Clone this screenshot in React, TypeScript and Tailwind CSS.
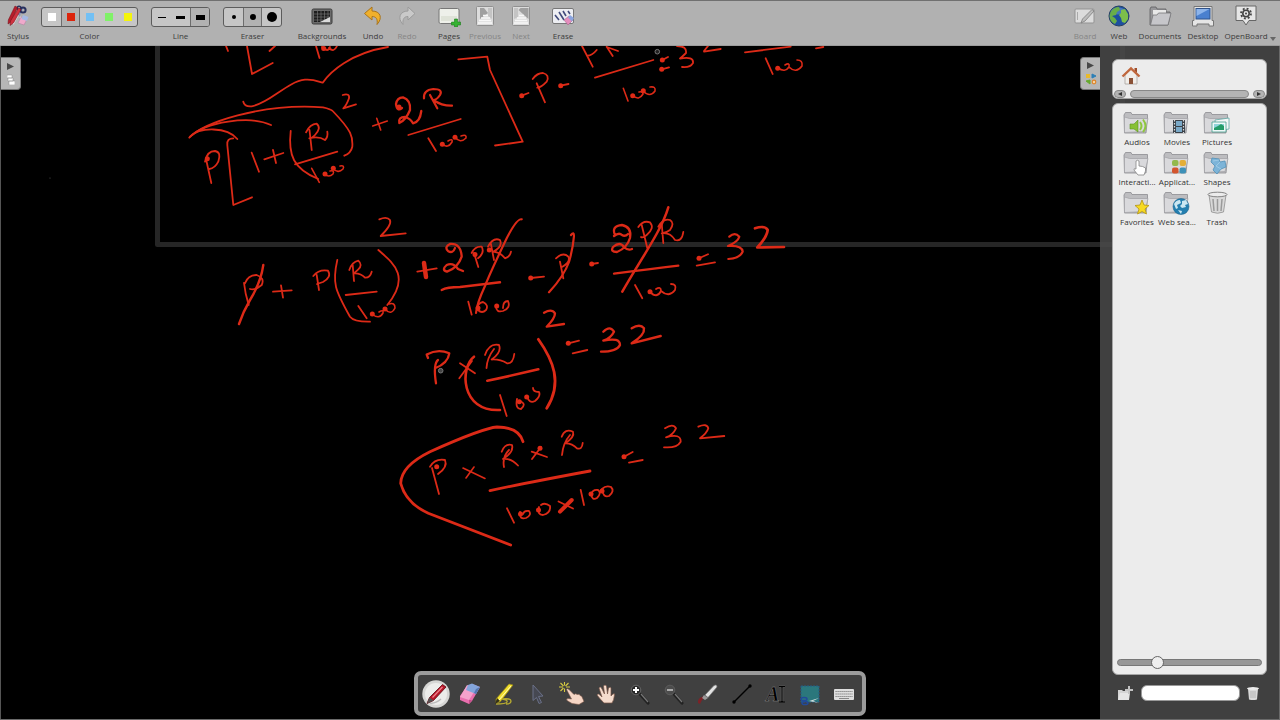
import React from 'react';

type Stroke = { d: string; w?: number };

// pen strokes on the board, in board coordinates
const strokes: Stroke[] = [
  // line cut by the toolbar
  { d: 'M226 46L228 51M247 46L252 74L272.7 63M269.5 51L275 46M316 46L319.5 58M322 47Q328 53 330 47M329 48Q334 53 337 46' },
  { d: 'M243.3 101.7Q244.5 107 251.7 106.3C270 103.3 286.7 81.7 305 79.7C313 79 317 81 322.7 82.7C330 72 350 53.3 388 47' },
  // overlines
  { d: 'M189.3 137.7C203 123 260 103 323 107.3Q331 109 332.7 111C352 131 353 137 352.3 146.7Q351 153 344.3 155.7' },
  { d: 'M190 136.7C205 122 250 115 271 125M190 136.7C200 126.7 227 126.7 237.3 139' },
  // P [ 1 + (R/100)
  { d: 'M205 161.7Q207 151 215 151Q221.7 152.3 218.3 161.7Q215 168.3 209.3 169M206 159L211.3 183' },
  { d: 'M233.3 138.3Q226.7 138.3 227.3 145L233.3 205L252 197.3' },
  { d: 'M251.7 152.7L259 171.7M264.3 159.3L283.3 153M273 150L276 163' },
  { d: 'M290.7 131C288 155 293.3 169 318.3 179' },
  { d: 'M306 132.3Q310 124.3 316.7 123.7Q321.7 128 315 135Q312 138.3 309.3 138.3Q319 136 325 140Q328.3 137 327.3 131.7M309.5 130L311.7 150' },
  { d: 'M295 164.3L337.3 151.7' },
  { d: 'M311.7 168.3L319.3 182.3M324 174Q329 178 333 174Q335 170 330 171M333 168.5Q338 174 343 169Q345 165 340 166', w: 1.6 },
  { d: 'M342.7 95Q350 93 349 98.3Q346.7 105 343.3 108.3L356 104.3' },
  // + 2R/100 ]
  { d: 'M372.7 126L387.3 121M376.7 118.3L380.7 130', w: 1.6 },
  { d: 'M402 108Q397 112 396 104Q397 97.5 403 97.3Q411 100 410 110Q406 120 399.3 123Q398 117 405 117Q411 119 413 123.3Q420 122 421.3 111', w: 2.3 },
  { d: 'M424 98.3Q423.3 90 433.3 89Q443.3 89 440 95Q436.7 100 433.3 100Q442 106 452 105.7M430 95L437.3 108.3', w: 2.2 },
  { d: 'M408.3 135L460.7 119M428.3 138.3L436 151' },
  { d: 'M442 144Q448 149 452 142Q453 138 448 141M455 137Q460 144 466 138Q467 134 461 136', w: 1.6 },
  { d: 'M458.3 59.3L487.3 56.7L490 70L522.7 141.7L495 145.5' },
  // - P - PR/100 : 32
  { d: 'M521.7 95.7L528.5 93M532.7 79Q537 73 543 73Q550 75 546.7 81.7Q541 87.7 537.3 87.7M536.7 83.3L545 102.3M560.7 85.7L568.5 84' },
  { d: 'M582 46L592.7 66.7M596.7 50Q592 55.7 587.3 55.7M606.7 46.7L612.7 56M606.7 47L618 51M595 77.7L653.3 60' },
  { d: 'M662.3 60L668 57M661.7 69.3L669 67.3M677 46Q687 46 686 53Q682 57 680 58.5Q694 56 693 63Q690 68 682 67M704 51.7L720.7 49M704 51L708 46' },
  { d: 'M623.3 88.3L628 101M632.7 95.7Q639 101 643 94Q643 91 639 92M643 91Q650 98 655 91Q656 86 650 87', w: 1.6 },
  { d: 'M745 52.3L790.7 46.7M765.7 58.3L772.7 74M816 48.3L823.3 47' },
  { d: 'M778 68Q785 73 789 67Q790 62 785 65M789 67Q796 74 802 66Q803 60 797 60', w: 1.6 },
  // P + P(R/100)^2
  { d: 'M379.3 219.3Q387 216 390 220Q392 225 380.7 236L405.7 233.3' },
  { d: 'M245 283.3Q248 275 256.7 275Q265 278 261.7 285Q255 290.7 250 289M244 283Q245 293 248.7 305' },
  { d: 'M263.3 265Q261 282 250 300Q243 312 239 324', w: 2.4 },
  { d: 'M273 291.7L291.7 290.3M281 285.3L283 297.7' },
  { d: 'M313.3 276Q319 269 328 270.7Q332 277 323 282L317 284M316.7 275L319 290' },
  { d: 'M337.3 260C332 283 335 290 350 316.7Q354 322 370 321.7' },
  { d: 'M352.7 265L354 281M349.3 270Q352 262 358.3 260.7Q363 265 358.3 269.3L354 273.3Q361 273 365 277.7Q370 278 371.7 271.7' },
  { d: 'M345.7 295L376.7 291.7M358.3 306L366.7 318.3' },
  { d: 'M372 314Q379 320 383 313Q384 309 379 312M385 309Q391 316 395 308Q395 302 389 304', w: 1.6 },
  { d: 'M378.3 250C393 263 411 276 387.3 305' },
  // + 2PR/100
  { d: 'M417.3 271.7L436.7 268.3' },
  { d: 'M424 263L426 277', w: 4.5 },
  { d: 'M455 248Q453 254 448 251Q444 247 450 244Q461 243 461.7 256.7Q458 268 447 271.7Q441 270 446.7 265Q453 262 458 269L463 271', w: 2.3 },
  { d: 'M471.7 253Q475 246 481.7 246.7Q485 253 478 258.3M474 253L478.3 267M488 246.7Q493 237 500 240Q503 247 493 251.7Q500 252 505 258.3Q510 257 511 251.7M490.7 243L494 260' },
  { d: 'M521.7 219.3Q517 218 506.7 238.3Q490 273 485 286Q477 303 476 313', w: 2.2 },
  { d: 'M441.7 290Q447 287 460 287L500 282.3', w: 2.4 },
  { d: 'M468.3 301.7L471.7 314.7M477 310Q477 303 483 302Q489 305 486 310Q482 314 478 310M496 306Q496 313 503 311Q511 308 508 301Q503 301 503 308' },
  // - P - 2PR/100 = 32
  { d: 'M530.7 278L544 276.7M556 258.3Q563.3 251.7 568.3 256.7Q571 262 562 267M560 261.7L563.3 278.3' },
  { d: 'M571 235Q574 231 574 236Q573 248 569 262Q564 276 549 292.3', w: 2.2 },
  { d: 'M591.7 264L598 263' },
  { d: 'M615 235Q611 226 622 225Q632 227 630 238Q627 248 617 252Q610 252 613 247Q620 241 624 247Q628 251 632 249M614 236Q619 232 622 235Q625 237 628 234', w: 2.3 },
  { d: 'M638.3 227Q643 220 650 222.3Q655 228 646.7 235Q642.7 238.3 641 237M641.7 225L647.3 248' },
  { d: 'M658.3 226.7Q663 218 670 220Q675 223 670 230Q666 233 661.7 233.3Q670 232 675 240Q682 242 683.3 232M661.7 223.3L663.3 243' },
  { d: 'M668.3 207.3C661 232 640 260 622.3 291.7', w: 2.5 },
  { d: 'M614 273.7Q650 269 678.3 265.7', w: 2.3 },
  { d: 'M635 285L642.3 298.3M650 292Q657 299 661 291Q661 286 656 289M661 291Q669 298 675 290Q677 284 671 284' },
  { d: 'M699 258.3L708 254.3M696.7 265.7L715 262.3' },
  { d: 'M729.3 236.7Q735 231.7 739.3 236.7Q738 241.7 728 246Q742 245 742.7 251.7Q740 258.3 728.3 259', w: 2.2 },
  { d: 'M755 228.3Q765 225 767.7 230Q767 237 757.3 247.5L784 247', w: 2.7 },
  // P x (R/100)^2 = 32
  { d: 'M544 312.7Q551.7 308.3 555 313.3Q555 318.3 546.7 326.7L564 324', w: 2.3 },
  { d: 'M568.3 343.3L579 340.7M572.7 353.3L587.3 350' },
  { d: 'M603.3 331.7Q610 325 614 331.7Q611 338 603.3 340.7Q620 337 620 345Q617 351.7 601 351.7', w: 2.3 },
  { d: 'M631.7 328.3Q640 323.3 644 328.3Q645 335 631.7 343.3L660.7 336', w: 2.4 },
  { d: 'M428 358L426.7 354.5Q438 348.3 449.3 353.3Q448 363 435 368.3M438 360Q433 364 436 383.3', w: 2.3 },
  { d: 'M460 363.3L475 373.3M459.3 378.3L472 361' },
  { d: 'M474 356.7C460 367 460 412 500 410', w: 2.6 },
  { d: 'M485 355Q489 343 499 345Q502 352 491.7 359.5Q500 359 507 363.3Q513 364 514.3 354M494 349Q487 358 486.5 368' },
  { d: 'M487.3 380.7Q510 376 538.3 369.3', w: 2.6 },
  { d: 'M500 395L506.7 416M517 399Q515 409 521 409Q527 404 520 401M527 396Q529 404 535 401Q541 396 539 392Q533 392 533 388' },
  { d: 'M538.3 339.3C553 360 563 383 546.7 408.3', w: 2.8 },
  // P x R x R / 100 x 100 = 32
  { d: 'M523 441.7Q519 427 497 427Q483 428 430 451.7Q401 466 400.7 483.3Q406 503 428.3 513.3L510.7 545', w: 2.8 },
  { d: 'M430 466.7Q435 458.3 445 460Q448 467 438 474M432 468L439 494' },
  { d: 'M463 468L485 478.5M466 478L474 467', w: 1.6 },
  { d: 'M501.7 451.7Q505 443 512 445Q514 452 503 459Q511 458 518 465.5M509 450Q502 457 504 467' },
  { d: 'M531.7 451.7L547 457M532 459L541 447' },
  { d: 'M561.7 436.7Q565 428 573 431.7Q575 437 565 443.3Q572 443 577 448.3Q582 450 582.7 443M570 435Q563 443 562 455' },
  { d: 'M490 490.7Q520 484 590 471', w: 2.8 },
  { d: 'M507 508.3L514 522.7M520 512Q519 520 526 518Q532 515 529 511Q524 510 523 514M539 507Q537 515 543 515Q551 513 550 506Q545 502 541 505' },
  { d: 'M560 511.7L571.7 500', w: 4 },
  { d: 'M558.5 501.5L573 508.5' },
  { d: 'M580.7 490L584 505M591 494Q592 501 597 498Q602 493 598 490Q593 489 591 494M602 489Q603 498 609 496Q615 491 611 487Q606 485 602 489' },
  { d: 'M624 456.7L632.7 452M629 462.7L642.7 460' },
  { d: 'M665 428.3Q673 423 676 428.3Q673 435 666 437.3Q681 433 680.7 441.7Q677 448.3 664 447.3' },
  { d: 'M698.3 426.7Q707 423 708.3 428.3Q707 433 700 438.3L724.3 436' },
];

const dots = [
  [323.7, 48.5], [207.3, 158.7], [325, 174], [333.3, 168.3], [399, 107], [442.3, 144.3], [455, 137.3],
  [521.7, 95.7], [560.7, 85.7], [632.7, 95.7], [643.3, 90.7], [662.3, 60], [661.7, 69.3], [777.7, 68.3],
  [372.3, 314], [385, 309], [475, 254.5], [489.3, 250], [478, 308], [496.7, 306], [530.7, 278],
  [591.7, 264], [650, 291.7], [699, 258.3], [568.3, 343.3], [519.3, 401.7], [526.7, 397],
  [436.7, 466.7], [540, 448.3], [520.5, 514], [538.5, 510], [591, 494], [602, 491], [624, 456.7],
];

function Board() {
  return (
    <svg
      className="absolute inset-0 h-full w-full"
      viewBox="0 46 1280 673"
      preserveAspectRatio="xMinYMin slice"
      fill="none"
      aria-label="Board"
    >
      <path d="M157.5 40V244.5H1122.5V40" stroke="#262626" strokeWidth="5" strokeLinejoin="round" />
      <g stroke="#dc2a17" strokeLinecap="round" strokeLinejoin="round">
        {strokes.map((s, i) => (
          <path key={i} d={s.d} strokeWidth={s.w ?? 1.8} />
        ))}
      </g>
      <g fill="#e02a16">
        {dots.map(([x, y], i) => (
          <circle key={i} cx={x} cy={y} r="2.5" />
        ))}
      </g>
      <circle cx="657.3" cy="51.7" r="2.3" fill="#222" stroke="#777" />
      <circle cx="440.7" cy="370.7" r="2.3" fill="#444" stroke="#777" />
      <circle cx="50" cy="178" r="0.6" fill="#555" />
    </svg>
  );
}

const icon = 'h-[22px] w-[24px] shrink-0';

const StylusIcon = () => (
  <svg viewBox="0 0 24 22" className={icon}>
    <path d="M11 2l2 8M17 2l-4 9" stroke="#8a94b8" strokeWidth="1.5" />
    <circle cx="17" cy="5" r="2.6" fill="none" stroke="#28305e" strokeWidth="2" />
    <circle cx="13" cy="3" r="1.8" fill="none" stroke="#28305e" strokeWidth="1.6" />
    <path d="M14 12l5 5M12 10l-5 9" stroke="#e4e6ee" strokeWidth="1.6" />
    <path d="M9 1l2.5 1.5L5 17l-3 2 .3-4z" fill="#b61d2b" stroke="#701018" strokeWidth=".5" />
    <path d="M12.500 3l2.500 1.500L7.500 18l-3.500 2.500.5-4.500z" fill="#cf3340" stroke="#701018" strokeWidth=".5" />
    <path d="M15 12l6 2-3 6-6-2z" fill="#efa9cb" stroke="#a87e9c" strokeWidth=".5" />
    <path d="M17 10l5.500 2-1.500 4-5.500-2z" fill="#a5b9e4" />
  </svg>
);

const BackgroundsIcon = () => (
  <svg viewBox="0 0 24 22" className={icon}>
    <rect x="2" y="4" width="20" height="15" rx="1.500" fill="#6b6b6b" stroke="#3d3d3d" />
    <rect x="4" y="6" width="16" height="11" fill="#1d1d1d" />
    <path d="M4 9h16M4 12h16M4 15h16M7.500 6v11M11 6v11M14.500 6v11M18 6v11" stroke="#7c7c7c" strokeWidth=".6" />
    <path d="M10 17l10-5v5z" fill="#dcdcdc" />
  </svg>
);

const ArrowIcon = ({ redo }: { redo?: boolean }) => (
  <svg viewBox="0 0 24 22" className={icon}>
    <path
      d={
        redo
          ? 'M20 8.500L13 2v4C5 6 2 13 8 19.500 7.500 14 9 11.500 13 11.500V15z'
          : 'M3.500 8.500L11 2v4c8.500 0 11 7 5 13.500C17 14 15 11.500 11 11.500V15z'
      }
      fill={redo ? '#c9c9c9' : '#f0b02c'}
      stroke={redo ? '#9b9b9b' : '#a9741b'}
      strokeWidth="1"
      strokeLinejoin="round"
    />
  </svg>
);

const PagesIcon = () => (
  <svg viewBox="0 0 24 22" className={icon}>
    <rect x="2" y="3.500" width="20" height="15" rx="1.500" fill="#eef0ea" stroke="#777" />
    <path d="M4 11h16v5H4z" fill="#dfe3d8" />
    <path d="M17.500 14h3v3h3v3h-3v2h-3v-2h-3v-3h3z" fill="#35b232" stroke="#1b7d1b" strokeWidth=".6" />
  </svg>
);

const PageTurnIcon = ({ next }: { next?: boolean }) => (
  <svg viewBox="0 0 24 22" className={icon}>
    <rect x="3.500" y="1.500" width="17" height="19" rx="1" fill="#dcdcdc" stroke="#909090" />
    <path d={next ? 'M19.500 3v11l-10-9 2-2z' : 'M7 3v11l8-6-4-5z'} fill="#a0a0a0" />
    <path d={next ? 'M5 3h4v9l-4 2z' : 'M15 3h4v11l-4-3z'} fill="#c4c4c4" />
    <path d="M10 10.500h5M8 13h9M6 15.500h12M5 18h14" stroke="#f8f8f8" strokeWidth="1.700" />
  </svg>
);

const EraseIcon = () => (
  <svg viewBox="0 0 24 22" className={icon}>
    <rect x="1.500" y="3.500" width="21" height="15" rx="1.500" fill="#edeef2" stroke="#777" />
    <path d="M4 10l4 5M8 7l5 8M12 6l3 5M17 6l2 3" stroke="#424b7c" strokeWidth="1.600" />
    <path d="M13 15l5-4 4 4-5 5z" fill="#e58dbd" stroke="#9b5b83" strokeWidth=".5" />
    <path d="M19 10l4 3-2 3.500-4-4z" fill="#8ba5df" />
  </svg>
);

const BoardIcon = () => (
  <svg viewBox="0 0 24 22" className={icon}>
    <rect x="2" y="4" width="19" height="14" rx="1" fill="#dcdcdc" stroke="#939393" />
    <path d="M4.500 7v8" stroke="#aaa" />
    <path d="M19 4.500l2 1.500L12 16l-4 2 1.500-4z" fill="#bcbcbc" stroke="#7c7c7c" strokeWidth=".8" />
  </svg>
);

const WebIcon = () => (
  <svg viewBox="0 0 24 22" className={icon}>
    <circle cx="12" cy="11" r="10" fill="#1d4f9f" stroke="#274064" />
    <ellipse cx="11" cy="6" rx="7" ry="3.500" fill="#6d9fdc" opacity=".5" />
    <path d="M3.500 7Q7 2 12 2l1 3-3 2-1 3-4 1 3 2 2 3-2 3Q3 17 2.500 11z" fill="#69ae48" />
    <path d="M14 5l4-1 3 5v5l-3 4-3-1-1-4-2-3 2-2z" fill="#7cbf4a" />
  </svg>
);

const DocumentsIcon = () => (
  <svg viewBox="0 0 24 22" className={icon}>
    <path d="M2 4l1-2h5l1 2h9v3h4v4l-2 9H2z" fill="#97979a" stroke="#5d5d60" strokeWidth=".8" />
    <path d="M5 5h13v5H5z" fill="#e8e8e8" />
    <path d="M2.500 20L5 10h4l1.500-2H23l-3 12z" fill="#c6c6ca" stroke="#77777a" strokeWidth=".8" />
  </svg>
);

const DesktopIcon = () => (
  <svg viewBox="0 0 24 22" className={icon}>
    <path d="M3 1.500h18v14h1.500V21H18v-2H6v2H1.500v-5.500H3z" fill="#e5e5e5" stroke="#777" />
    <rect x="5" y="3.500" width="14" height="10.500" fill="#4a80cf" stroke="#31548c" />
    <path d="M5.500 4h13L5.500 11z" fill="#8db4ea" />
  </svg>
);

const OpenBoardIcon = () => (
  <svg viewBox="0 0 24 22" className={icon}>
    <path d="M2 1h20v14.500h-7L12 20l-3-4.500H2z" fill="#e6e6e6" stroke="#666" strokeLinejoin="round" />
    <circle cx="12" cy="8.500" r="3.200" fill="none" stroke="#444" strokeWidth="1.600" />
    <circle cx="12" cy="8.500" r="5" fill="none" stroke="#444" strokeWidth="1.800" strokeDasharray="1.900 2.030" />
    <circle cx="12" cy="8.500" r="1" fill="#444" />
  </svg>
);

type Item = { label: string; width: string; icon: React.ReactNode; disabled?: boolean };

function ToolButton({ item }: { item: Item }) {
  return (
    <button
      type="button"
      disabled={item.disabled}
      className={`${item.width} flex shrink-0 flex-col items-center gap-[3px] whitespace-nowrap leading-3 ${
        item.disabled ? 'text-[#858585]' : 'text-[#3c3c3c]'
      }`}
    >
      {item.icon}
      <span>{item.label}</span>
    </button>
  );
}

function Choice({ label, cells, active, cell }: { label: string; cells: { name: string; mark: React.ReactNode }[]; active: number; cell: string }) {
  return (
    <div role="group" aria-label={label} className="flex shrink-0 flex-col items-center gap-[3px] pt-0.5 leading-3 text-[#3c3c3c]">
      <div className="flex h-5 overflow-hidden rounded-[3px] border border-[#5c5c5c] bg-[#c6c6c6]">
        {cells.map((c, i) => (
          <button
            key={c.name}
            type="button"
            aria-label={c.name}
            aria-pressed={i === active}
            className={`${cell} flex items-center justify-center ${i === active ? 'border-x border-[#6d6d6d] bg-[#b2b2b2] first:border-l-0 last:border-r-0' : ''}`}
          >
            {c.mark}
          </button>
        ))}
      </div>
      <span>{label}</span>
    </div>
  );
}

const colors = [
  { name: 'White', mark: <span className="h-2 w-2 bg-white" /> },
  { name: 'Red', mark: <span className="h-2 w-2 bg-[#dc240c]" /> },
  { name: 'Blue', mark: <span className="h-2 w-2 bg-[#72c0f4]" /> },
  { name: 'Green', mark: <span className="h-2 w-2 bg-[#80f268]" /> },
  { name: 'Yellow', mark: <span className="h-2 w-2 bg-[#f4f40c]" /> },
];

const lines = [
  { name: 'Thin line', mark: <span className="h-px w-2 bg-black" /> },
  { name: 'Medium line', mark: <span className="h-[3px] w-[9px] bg-black" /> },
  { name: 'Thick line', mark: <span className="h-[5px] w-[9px] bg-black" /> },
];

const erasers = [
  { name: 'Small eraser', mark: <span className="h-1 w-1 rounded-full bg-black" /> },
  { name: 'Medium eraser', mark: <span className="h-1.5 w-1.5 rounded-full bg-black" /> },
  { name: 'Large eraser', mark: <span className="h-2.5 w-2.5 rounded-full bg-black" /> },
];

const editItems: Item[] = [
  { label: 'Undo', width: 'w-[34px]', icon: <ArrowIcon /> },
  { label: 'Redo', width: 'w-[34px]', icon: <ArrowIcon redo />, disabled: true },
];

const pageItems: Item[] = [
  { label: 'Pages', width: 'w-9', icon: <PagesIcon /> },
  { label: 'Previous', width: 'w-9', icon: <PageTurnIcon />, disabled: true },
  { label: 'Next', width: 'w-9', icon: <PageTurnIcon next />, disabled: true },
];

const modeItems: Item[] = [
  { label: 'Board', width: 'w-[34px]', icon: <BoardIcon />, disabled: true },
  { label: 'Web', width: 'w-[34px]', icon: <WebIcon /> },
  { label: 'Documents', width: 'w-12', icon: <DocumentsIcon /> },
  { label: 'Desktop', width: 'w-[38px]', icon: <DesktopIcon /> },
  { label: 'OpenBoard', width: 'w-12', icon: <OpenBoardIcon /> },
];

function TopBar() {
  return (
    <header className="relative z-10 flex h-[46px] shrink-0 items-start border-t border-b border-t-[#707070] border-b-[#9c9c9c] bg-[#b1b1b1] pt-1 pl-1 text-[8px]">
      <ToolButton item={{ label: 'Stylus', width: 'w-7', icon: <StylusIcon /> }} />
      <div className="ml-[9px] flex gap-[13px]">
        <Choice label="Color" cells={colors} active={1} cell="w-[19px]" />
        <Choice label="Line" cells={lines} active={2} cell="w-[19px]" />
        <Choice label="Eraser" cells={erasers} active={1} cell="w-[19px]" />
      </div>
      <div className="ml-4 flex">
        <ToolButton item={{ label: 'Backgrounds', width: 'w-12', icon: <BackgroundsIcon /> }} />
      </div>
      <div className="ml-2.5 flex">
        {editItems.map((item) => <ToolButton key={item.label} item={item} />)}
      </div>
      <div className="ml-[7px] flex">
        {pageItems.map((item) => <ToolButton key={item.label} item={item} />)}
      </div>
      <div className="ml-[7px] flex">
        <ToolButton item={{ label: 'Erase', width: 'w-[34px]', icon: <EraseIcon /> }} />
      </div>
      <div className="ml-auto flex">
        {modeItems.map((item) => <ToolButton key={item.label} item={item} />)}
        <button type="button" aria-label="More" className="flex h-9 w-[10px] items-end">
          <svg viewBox="0 0 6 4" className="h-1 w-1.5"><path d="M0 0h6L3 4z" fill="#666" /></svg>
        </button>
      </div>
    </header>
  );
}

const Folder = ({ children }: { children?: React.ReactNode }) => (
  <svg viewBox="0 0 28 26" className="h-[26px] w-7">
    <path d="M1 5L2.500 2.500H8l1 2h15.500V8L23 23H1.500z" fill="#bdbdc0" stroke="#8b8b90" strokeWidth=".8" />
    <path d="M1.500 22.500V7l5 1.500H25l-3 13z" fill="#d9d9dc" stroke="#a0a0a5" strokeWidth=".7" />
    {children}
  </svg>
);

const library = [
  {
    label: 'Audios',
    icon: (
      <Folder>
        <path d="M7 14h4l4-4v12l-4-3H7z" fill="#87c034" stroke="#5d9420" strokeWidth=".6" />
        <path d="M17 12q3 4 0 8M20 9.500q5 6.500 0 12.500" stroke="#8fc73e" strokeWidth="2" fill="none" />
      </Folder>
    ),
  },
  {
    label: 'Movies',
    icon: (
      <Folder>
        <rect x="10" y="10" width="12" height="13" fill="#3a4148" />
        <path d="M13 11h6v5h-6zM13 17h6v5h-6z" fill="#7aa9c8" />
        <path d="M11.500 10v13M20.500 10v13" stroke="#ddd" strokeWidth="1.200" strokeDasharray="1.500 1.500" />
      </Folder>
    ),
  },
  {
    label: 'Pictures',
    icon: (
      <Folder>
        <path d="M12 10l14-2v11l-13 2z" fill="#f3f7f7" stroke="#60a8a4" strokeWidth=".8" />
        <path d="M9 12h14v10H9z" fill="#eef8f8" stroke="#48a08e" strokeWidth=".8" />
        <path d="M11 14h10v6H11z" fill="#8fd4da" />
        <path d="M11 20v-2l4-2 3-2 3 2v4z" fill="#249c68" />
      </Folder>
    ),
  },
  {
    label: 'Interacti...',
    icon: (
      <Folder>
        <path
          d="M13 11q1.500-1.500 3 0v5q4 0 6.500 2v3l-1.500 4h-6l-4-5q-.5-2 2-1z"
          fill="#fff"
          stroke="#858585"
          strokeWidth=".8"
        />
      </Folder>
    ),
  },
  {
    label: 'Applicat...',
    icon: (
      <Folder>
        <rect x="9" y="10" width="6.500" height="6" rx="2" fill="#93b94c" />
        <rect x="16.500" y="10" width="6.500" height="6" rx="2" fill="#e3ae37" />
        <rect x="9" y="17.500" width="6.500" height="6" rx="2" fill="#d3552e" />
        <rect x="16.500" y="17.500" width="6.500" height="6" rx="2" fill="#3e91b8" />
      </Folder>
    ),
  },
  {
    label: 'Shapes',
    icon: (
      <Folder>
        <path d="M9 8l7 1 1 3 5-1 1 6-5 2-4 5-4-4 2-4-4-4z" fill="#7db4d8" stroke="#5290b8" strokeWidth=".8" />
        <path d="M10 11l6-1M13 16l5 3M17 12l-4 4" stroke="#a5cfe8" strokeWidth=".8" />
      </Folder>
    ),
  },
  {
    label: 'Favorites',
    icon: (
      <Folder>
        <path d="M19 10l2 5 5 .5-4 3.500 1.500 5-4.500-2.500-4.500 2.500L16 19l-4-3.500 5-.5z" fill="#f7da22" stroke="#b49412" strokeWidth=".8" />
      </Folder>
    ),
  },
  {
    label: 'Web sea...',
    icon: (
      <Folder>
        <circle cx="18" cy="16.500" r="8" fill="#247fb0" stroke="#1b648e" strokeWidth=".6" />
        <path d="M11 14q2-4 6-4l1 3-4 2 1 3-2 1zM19 11l4-1 2 4-3 1 1 2-4 1-2-2 2-2zM15 20l4 1-1 3z" fill="#cbe7f2" />
      </Folder>
    ),
  },
  {
    label: 'Trash',
    icon: (
      <svg viewBox="0 0 28 26" className="h-[26px] w-7">
        <path d="M6 5h17l-2.500 17q-6 2.500-12 0z" fill="#d9d9d9" stroke="#8f8f8f" strokeWidth=".8" />
        <ellipse cx="14.500" cy="4.500" rx="9.500" ry="2.300" fill="#ececec" stroke="#777" strokeWidth=".9" />
        <path d="M10 9l1 12M14.500 9v12M19 9l-1 12" stroke="#9a9a9a" strokeWidth="1.500" />
      </svg>
    ),
  },
];

function SidePanel() {
  return (
    <aside className="relative flex w-[180px] shrink-0 flex-col border-r border-[#6a6a6a] bg-[#4a4a4add] px-3 pt-[13px] pb-[18px]">
      <div className="flex h-10 shrink-0 flex-col justify-between overflow-hidden rounded-md border border-[#a6a6a6] bg-[#ececec]">
        <button type="button" aria-label="Home" className="mt-1.5 ml-2 h-5 w-5">
          <svg viewBox="0 0 20 20" className="h-5 w-5">
            <path d="M4 9l6-6 6 6v9H4z" fill="#f1eeea" stroke="#a8a29e" strokeWidth=".8" />
            <path d="M13.500 2h2.500v5l-2.500-2z" fill="#9e4e2b" />
            <path d="M1.500 10.500L10 2.500l8.500 8" fill="none" stroke="#c0673d" strokeWidth="2.400" />
            <path d="M8 12h4v6H8z" fill="#8a5136" />
          </svg>
        </button>
        <div className="flex h-[9px] shrink-0 items-center justify-between gap-1 px-px">
          <button type="button" aria-label="Scroll left" className="flex h-2 w-3 items-center justify-center rounded-full border border-[#888] bg-[#b4b4b4]">
            <svg viewBox="0 0 4 4" className="h-1 w-1"><path d="M4 0v4L0 2z" fill="#333" /></svg>
          </button>
          <div className="h-2 flex-1 rounded-full border border-[#888] bg-[#b4b4b4]" />
          <button type="button" aria-label="Scroll right" className="flex h-2 w-3 items-center justify-center rounded-full border border-[#888] bg-[#b4b4b4]">
            <svg viewBox="0 0 4 4" className="h-1 w-1"><path d="M0 0v4l4-2z" fill="#333" /></svg>
          </button>
        </div>
      </div>

      <div className="mt-1 flex flex-1 flex-col justify-between rounded-md border border-[#a6a6a6] bg-[#ececec] px-1 pt-1.5 pb-2">
        <div className="grid grid-cols-[repeat(3,40px)] text-[8px] text-[#333]">
          {library.map((item) => (
            <button key={item.label} type="button" className="flex h-10 flex-col items-center whitespace-nowrap leading-3">
              {item.icon}
              <span>{item.label}</span>
            </button>
          ))}
        </div>
        <input
          type="range"
          aria-label="Icon size"
          defaultValue={25}
          className="h-[7px] w-full appearance-none rounded-full border border-[#777] bg-[#979797] [&::-webkit-slider-thumb]:h-[13px] [&::-webkit-slider-thumb]:w-[13px] [&::-webkit-slider-thumb]:appearance-none [&::-webkit-slider-thumb]:rounded-full [&::-webkit-slider-thumb]:border [&::-webkit-slider-thumb]:border-[#666] [&::-webkit-slider-thumb]:bg-[#eeeeee]"
        />
      </div>

      <div className="mt-2.5 flex items-center gap-[7px] pr-2 pl-1.5">
        <button type="button" aria-label="New folder" className="h-4 w-4 shrink-0">
          <svg viewBox="0 0 16 16" className="h-4 w-4">
            <path d="M0 5h4l1 1h6v9H0z" fill="#d4d4d4" />
            <path d="M0 15l2-7h10l-1 7z" fill="#e6e6e6" />
            <path d="M10 1h2v3h3v2h-3v3h-2V6H7V4h3z" fill="#c2c2c2" />
          </svg>
        </button>
        <input
          type="text"
          aria-label="Search"
          className="h-4 min-w-0 flex-1 rounded-md border border-[#999] bg-white px-1 text-[8px]"
        />
        <button type="button" aria-label="Delete" className="h-4 w-3 shrink-0">
          <svg viewBox="0 0 12 16" className="h-4 w-3">
            <path d="M1 4h10l-1 10.500q-4 1-8 0z" fill="#d9d9d9" />
            <ellipse cx="6" cy="3.500" rx="6" ry="1.500" fill="#ececec" />
            <path d="M4 6v7M6 6v7M8 6v7" stroke="#aaa" strokeWidth=".8" />
          </svg>
        </button>
      </div>
    </aside>
  );
}

const tool = 'h-7 w-7';

const Magnifier = ({ plus }: { plus?: boolean }) => (
  <svg viewBox="0 0 28 28" className={tool}>
    <path d="M14 14l8 9" stroke="#222" strokeWidth="3.200" strokeLinecap="round" />
    <path d="M15 14l7 8" stroke="#777" strokeWidth="1.200" />
    <circle cx="10" cy="10" r="4.800" fill={plus ? '#2a2a2a' : '#4c4c4c'} stroke={plus ? '#666' : '#5c5c5c'} />
    <path d={plus ? 'M7 10h6M10 7v6' : 'M7 10h6'} stroke={plus ? '#fff' : '#aaa'} strokeWidth="2" />
  </svg>
);

const tools = [
  {
    name: 'Pen',
    icon: (
      <svg viewBox="0 0 28 28" className={tool}>
        <circle cx="14" cy="14" r="13.700" fill="#d6d6d4" />
        <circle cx="14" cy="14" r="11" fill="#ececea" />
        <path d="M8 23q5 1 11-4" stroke="#bbb" strokeWidth="1.500" fill="none" />
        <path d="M20.500 4.500l3.500 2.500L11.500 20.500 5 23.500l2.500-6z" fill="#b71427" stroke="#5b0a12" strokeWidth=".8" />
        <path d="M20.500 7L10.500 17.500" stroke="#f0838d" strokeWidth="1.200" />
        <path d="M7.500 17.500l4 3L5 23.500z" fill="#555" />
      </svg>
    ),
  },
  {
    name: 'Eraser',
    icon: (
      <svg viewBox="0 0 28 28" className={tool}>
        <path d="M11 6l5-2 8 3-8 14-3 3-9-4v-4z" fill="#e96fae" />
        <path d="M11 5l9 4-7 11-9-3z" fill="#f5a2cc" />
        <path d="M12 5l4-1.500L24 7l-4 7-10-4z" fill="#83a5dc" />
        <path d="M20 9l4-2-4 7-2-1z" fill="#5577b2" />
        <path d="M13 20v4l3-4" fill="#c84c8b" />
      </svg>
    ),
  },
  {
    name: 'Highlighter',
    icon: (
      <svg viewBox="0 0 28 28" className={tool}>
        <path d="M6 24q10 0 11-2t-5-3q9-1 9 2t-5 3" stroke="#b7ab30" strokeWidth="1.300" fill="none" />
        <path d="M19 4l4 1L10 22l-4 1 0-4z" fill="#f2df2f" stroke="#958616" strokeWidth=".7" />
        <path d="M21 6L9 20" stroke="#fffac0" />
        <path d="M7 18l3 3-5 3z" fill="#33301b" />
      </svg>
    ),
  },
  {
    name: 'Select',
    icon: (
      <svg viewBox="0 0 28 28" className={tool}>
        <path d="M9 5l10 11-4.500.5 3 6-2.500 1-2.500-6-3.500 3z" fill="#464852" stroke="#6a7088" />
      </svg>
    ),
  },
  {
    name: 'Play',
    icon: (
      <svg viewBox="0 0 28 28" className={tool}>
        <path d="M6.500 2v3.500M6.500 8.500V12M1 7h4M8 7h4M2.500 3l3 3M10.500 3l-3 3M2.500 11l3-3" stroke="#d6ca40" strokeWidth="1.100" />
        <path
          d="M8.500 9.500q1-1.500 2.500 0l5 5q2-1.500 3 0 2.500-1 3 1 2 0 2.500 2.500l1.500 3.500-5 3-7-1-5-3q-1-2 1-2l3.500.5z"
          fill="#f6d6c5"
          stroke="#7a5546"
          strokeWidth=".6"
        />
      </svg>
    ),
  },
  {
    name: 'Scroll page',
    icon: (
      <svg viewBox="0 0 28 28" className={tool}>
        <path
          d="M12 23q-4-4-7-8 1-2 3 0l2 2L7 8q1-2 2.500 0l3 6-1-8q1.500-2 3 0l1 8 1-6q2-1.500 2.500 0l0 8 2-2q2-1 1.500 1-.5 5-2.500 8z"
          fill="#f5dccd"
          stroke="#7a5546"
          strokeWidth=".7"
        />
      </svg>
    ),
  },
  { name: 'Zoom in', icon: <Magnifier plus /> },
  { name: 'Zoom out', icon: <Magnifier /> },
  {
    name: 'Laser pointer',
    icon: (
      <svg viewBox="0 0 28 28" className={tool}>
        <path d="M4 23q-1-5 6-7l2 1-4 3-2 4z" fill="#7d2227" />
        <path d="M11 15l9-9.500q3-1.500 3 1.500l-9 10.500z" fill="#e2e2e2" stroke="#777" strokeWidth=".7" />
        <path d="M10 15l4 3-3 2-3-2z" fill="#999" />
      </svg>
    ),
  },
  {
    name: 'Draw line',
    icon: (
      <svg viewBox="0 0 28 28" className={tool}>
        <path d="M6 22L22 6" stroke="#000" strokeWidth="1.500" />
        <circle cx="6" cy="22" r="1.700" />
        <circle cx="22" cy="6" r="1.700" />
      </svg>
    ),
  },
  {
    name: 'Write text',
    icon: (
      <svg viewBox="0 0 28 28" className={tool}>
        <text x="4" y="21" fontFamily="Liberation Serif, serif" fontSize="20" fontStyle="italic" fontWeight="700" stroke="#888" strokeWidth=".4">A</text>
        <path d="M17 6.500h2.500l.5 1 .5-1H23M20 7v15M17 22h2.500l.5-1 .5 1H23" stroke="#888" strokeWidth="2.200" fill="none" />
        <path d="M17 6.500h2.500l.5 1 .5-1H23M20 7v15M17 22h2.500l.5-1 .5 1H23" stroke="#000" strokeWidth="1.300" fill="none" />
      </svg>
    ),
  },
  {
    name: 'Capture part of the screen',
    icon: (
      <svg viewBox="0 0 28 28" className={tool}>
        <rect x="5" y="6" width="18" height="16" fill="#2b777c" stroke="#255c83" strokeDasharray="2 1" />
        <path d="M13 21l10-3-6 3 6 2z" fill="#d4dfdf" />
        <ellipse cx="8" cy="19" rx="3" ry="1.600" fill="none" stroke="#214a9b" strokeWidth="1.500" />
        <ellipse cx="9" cy="23" rx="3" ry="1.600" fill="none" stroke="#214a9b" strokeWidth="1.500" />
      </svg>
    ),
  },
  {
    name: 'Virtual keyboard',
    icon: (
      <svg viewBox="0 0 28 28" className={tool}>
        <rect x="4" y="9" width="20" height="11" rx="1" fill="#dedede" />
        <path d="M5.500 11.500h17M5.500 14h17M5.500 16.500h17" stroke="#777" strokeWidth="1.200" strokeDasharray="1.200 .8" />
        <path d="M9 18.500h10" stroke="#888" />
      </svg>
    ),
  },
];

function StylusPalette() {
  return (
    <nav aria-label="Stylus palette" className="absolute bottom-[3px] left-1/2 flex h-[45px] -translate-x-1/2 items-center rounded-[7px] border-4 border-[#9b9b9b] bg-[#404040] px-px">
      {tools.map((t) => (
        <button key={t.name} type="button" aria-label={t.name} className="flex w-[34px] justify-center">
          {t.icon}
        </button>
      ))}
    </nav>
  );
}

export default function App() {
  return (
    <div className="flex h-screen flex-col overflow-hidden bg-black font-['Open_Sans',sans-serif]">
      <TopBar />
      <main className="relative flex flex-1 border-b border-[#6a6a6a]">
        <Board />
        <div className="relative flex flex-1 items-start justify-between border-l border-[#555] pt-[11px]">
          <button type="button" aria-label="Show pages" className="flex h-[33px] w-5 flex-col items-center justify-center gap-1 rounded-r border border-l-0 border-[#777] bg-[#b6b6b6]">
            <svg viewBox="0 0 7 7" className="h-[7px] w-[7px]"><path d="M0 0l7 3.500L0 7z" fill="#484848" /></svg>
            <svg viewBox="0 0 8 11" className="h-[11px] w-2">
              <path d="M0 1h5v3H0zM1 4h5v3H1zM2 7h6v4H2z" fill="#fff" stroke="#888" strokeWidth=".5" />
            </svg>
          </button>
          <button type="button" aria-label="Hide library" className="flex h-[33px] w-5 flex-col items-center justify-center gap-1 rounded-l border border-r-0 border-[#777] bg-[#b6b6b6]">
            <svg viewBox="0 0 7 7" className="h-[7px] w-[7px]"><path d="M0 0l7 3.500L0 7z" fill="#484848" /></svg>
            <svg viewBox="0 0 12 12" className="h-3 w-3">
              <path d="M1 1h4v4H1z" fill="#e9ba2b" />
              <path d="M7 1l4 2-4 2z" fill="#2d7fb6" stroke="#2d7fb6" />
              <path d="M1 8l4-1v4z" fill="#66a92d" stroke="#66a92d" />
              <circle cx="9" cy="9" r="1.800" fill="#f5d5a5" stroke="#e0862a" strokeWidth="1.200" />
            </svg>
          </button>
        </div>
        <SidePanel />
        <StylusPalette />
      </main>
    </div>
  );
}
